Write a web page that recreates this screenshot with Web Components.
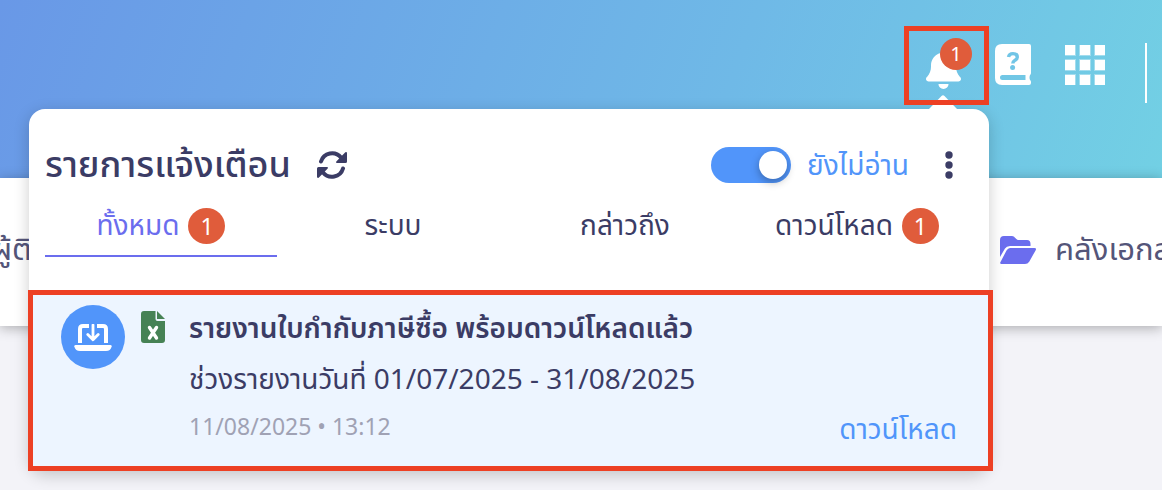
<!DOCTYPE html>
<html lang="th">
<head>
    <meta charset="UTF-8">
    <meta name="viewport" content="width=device-width, initial-scale=1.0">
    <title>รายการแจ้งเตือน</title>
    <style>
        body {
            margin: 0;
            min-height: 100vh;
            overflow: hidden;
            background: #f3f3f8;
            color: #3b3c65;
            font-family: "Noto Sans", "Noto Sans Thai", "Noto Sans Thai UI", sans-serif;
            font-size: 28px;
            --blue: #5195fa;
            --purple: #6b6dee;
            --badge: #e05c3b;
            --mark: #ed4024;
            --muted: #a0a2b4;
        }
    </style>
</head>
<body>
    <app-shell>
        <app-header slot="header"></app-header>
        <app-nav slot="nav"></app-nav>
        <notification-panel slot="panel">
            <notification-tab slot="tabs" count="1" selected>ทั้งหมด</notification-tab>
            <notification-tab slot="tabs">ระบบ</notification-tab>
            <notification-tab slot="tabs">กล่าวถึง</notification-tab>
            <notification-tab slot="tabs" count="1">ดาวน์โหลด</notification-tab>
            <notification-item>
                <span slot="title">รายงานใบกำกับภาษีซื้อ พร้อมดาวน์โหลดแล้ว</span>
                <span slot="detail">ช่วงรายงานวันที่ 01/07/2025 - 31/08/2025</span>
                <span slot="time">11/08/2025 • 13:12</span>
                <span slot="action">ดาวน์โหลด</span>
            </notification-item>
        </notification-panel>
    </app-shell>

    <script>
        const ICONS = {
            bell: ['0 0 448 512', '<path d="M224 0c-17.7 0-32 14.3-32 32v19.2C119 66 64 130.6 64 208v18.8c0 47-17.3 92.4-48.5 127.6l-7.4 8.3c-8.4 9.4-10.4 22.9-5.3 34.4S19.4 416 32 416h384c12.6 0 24-7.4 29.2-18.9s3.1-25-5.3-34.4l-7.4-8.3C401.3 319.2 384 273.9 384 226.8V208c0-77.4-55-142-128-156.8V32c0-17.7-14.3-32-32-32zm45.3 493.3c12-12 18.7-28.3 18.7-45.3H160c0 17 6.7 33.3 18.7 45.3S207 512 224 512s33.3-6.7 45.3-18.7z"/>'],
            book: ['0 0 36 41', '<path fill-rule="evenodd" d="M7 0h27q2 0 2 2v27q0 1.500-1 2-1 2.500 0 5 1 .5 1 2v1q0 2-2 2H7q-7 0-7-7V7q0-7 7-7zM7.500 31a2.500 2.500 0 0 0 0 5H30.500v-5z"/><path d="M13.500 13q.6-3.400 4.500-3.400 4.300 0 4.300 3.600c0 3.200-4.500 2.800-4.500 6.300" fill="none" stroke="#71c5e6" stroke-width="3.400"/><circle cx="17.600" cy="23.400" r="2.500" fill="#71c5e6"/>'],
            grid: ['0 0 40 40', '<path d="M0 0h10v10H0zM15 0h10v10H15zM30 0h10v10H30zM0 15h10v10H0zM15 15h10v10H15zM30 15h10v10H30zM0 30h10v10H0zM15 30h10v10H15zM30 30h10v10H30z"/><path opacity=".35" d="M0 0h11v11H0zM14 0h12v11H14zM29 0h11v11H29zM0 14h11v12H0zM14 14h12v12H14zM29 14h11v12H29zM0 29h11v11H0zM14 29h12v11H14zM29 29h11v11H29z"/>'],
            refresh: ['0 0 30 28', '<g fill="none" stroke="currentColor" stroke-width="4" stroke-linecap="round"><path d="M4 10.500A11.500 11.500 0 0 1 24 6.500"/><path d="M26 17.500A11.500 11.500 0 0 1 6 21.500"/></g><path d="M28.300 1.200q1.700-.6 1.700 1V10.500q0 1.500-1.500 1.500h-8.500q-1.800-.3-.7-1.600zM1.700 26.800Q0 27.400 0 25.800V17.500Q0 16 1.500 16h8.500q1.800.3.700 1.600z"/>'],
            dots: ['0 0 8 28', '<circle cx="4" cy="4" r="3.700"/><circle cx="4" cy="14" r="3.700"/><circle cx="4" cy="24" r="3.700"/>'],
            folder: ['0 0 36 28', '<path d="M4 0h8c3 0 3.500 4 7 4h8q3.500 0 3.500 4v2H10Q6.500 10 5 12.500L0 21V4Q0 0 4 0z"/><path d="M10 12h24.500q2.500 0 1.200 2.200l-6.500 11.500Q27.800 28 25 28H1.500Q-.5 28 .5 26l6-11.500Q8 12 10 12z"/>'],
            laptop: ['0 0 38 27', '<path d="M6 19V5q0-3 3-3h6M23 2h6q3 0 3 3v14" fill="none" stroke="currentColor" stroke-width="4"/><path d="M19 1v14.500M13.800 10.500l5.200 5.300 5.200-5.300" fill="none" stroke="currentColor" stroke-width="2.800" stroke-linecap="round" stroke-linejoin="round"/><path d="M1.500 21h35q1.500 0 1.200 1.500Q36.500 27 32 27H6Q1.500 27 .3 22.500 0 21 1.500 21z"/>'],
            excel: ['0 0 24 32', '<path d="M3 0h11.500v8q0 2 2 2H24v19q0 3-3 3H3q-3 0-3-3V3Q0 0 3 0z"/><path d="M16 0l8 8h-8z"/><path d="M8.500 16.500l7 10.500M15.500 16.500l-7 10.500" fill="none" stroke="#fff" stroke-width="3.400" stroke-linecap="round"/>']
        };

        class AppIcon extends HTMLElement {
            connectedCallback() {
                const [box, shape] = ICONS[this.getAttribute('name')];
                const shadow = this.attachShadow({ mode: 'open' });
                shadow.innerHTML = `
                    <style>
                        :host { display: block; flex: none; }
                        svg { display: block; width: 100%; height: 100%; fill: currentColor; }
                    </style>
                    <svg viewBox="${box}" aria-hidden="true">${shape}</svg>
                `;
            }
        }

        class CountBadge extends HTMLElement {
            connectedCallback() {
                this.attachShadow({ mode: 'open' }).innerHTML = `
                    <style>
                        :host {
                            display: flex;
                            align-items: center;
                            justify-content: center;
                            flex: none;
                            width: 37px;
                            height: 36px;
                            border-radius: 50%;
                            background: var(--badge);
                            color: #fff;
                            font-size: 23px;
                            line-height: 1;
                        }
                        :host([small]) { width: 32px; height: 32px; font-size: 20px; }
                    </style>
                    <slot></slot>
                `;
            }
        }

        // Page frame: stacked header and nav, with the panel floating over both
        class AppShell extends HTMLElement {
            connectedCallback() {
                this.attachShadow({ mode: 'open' }).innerHTML = `
                    <style>
                        :host { display: block; position: relative; }
                        ::slotted(notification-panel) {
                            position: absolute;
                            top: 109px;
                            left: 29px;
                            right: 173px;
                            z-index: 1;
                        }
                    </style>
                    <slot name="header"></slot>
                    <slot name="nav"></slot>
                    <slot name="panel"></slot>
                `;
            }
        }

        class AppHeader extends HTMLElement {
            connectedCallback() {
                this.attachShadow({ mode: 'open' }).innerHTML = `
                    <style>
                        :host {
                            display: flex;
                            justify-content: flex-end;
                            align-items: flex-start;
                            box-sizing: border-box;
                            height: 178px;
                            padding: 26px 15px 0;
                            background: linear-gradient(110deg, #6998e7, #6fb9e7 62%, #72d0e4);
                            color: #fff;
                        }
                        button {
                            margin: 18px 0 0;
                            padding: 0;
                            border: 0;
                            background: none;
                            color: inherit;
                            font: inherit;
                        }
                        .bell {
                            position: relative;
                            z-index: 2;
                            box-sizing: border-box;
                            width: 85px;
                            height: 79px;
                            margin: 0 6px 0 0;
                            padding: 18px 17px;
                            border: 5px solid var(--mark);
                        }
                        .bell app-icon { width: 35px; height: 40px; }
                        count-badge { position: absolute; top: 7px; right: 12px; }
                        .book app-icon { width: 36px; height: 41px; }
                        .apps { margin: 19px 0 0 34px; }
                        .apps app-icon { width: 40px; height: 40px; }
                        .divider { width: 2px; height: 60px; margin: 17px 0 0 40px; background: #fff; }
                    </style>
                    <button class="bell" aria-label="การแจ้งเตือน">
                        <app-icon name="bell"></app-icon>
                        <count-badge small>1</count-badge>
                    </button>
                    <button class="book" aria-label="คู่มือ"><app-icon name="book"></app-icon></button>
                    <button class="apps" aria-label="แอป"><app-icon name="grid"></app-icon></button>
                    <div class="divider"></div>
                `;
            }
        }

        class AppNav extends HTMLElement {
            connectedCallback() {
                this.attachShadow({ mode: 'open' }).innerHTML = `
                    <style>
                        :host {
                            display: flex;
                            justify-content: space-between;
                            align-items: center;
                            box-sizing: border-box;
                            height: 148px;
                            padding-bottom: 4px;
                            background: #fff;
                            box-shadow: 0 2px 12px rgba(0, 0, 0, 0.3);
                            white-space: nowrap;
                        }
                        a {
                            display: flex;
                            align-items: center;
                            gap: 19px;
                            color: #545579;
                            font-size: 31px;
                            text-decoration: none;
                        }
                        .contacts { margin-left: -8px; }
                        .files { width: 162px; }
                        app-icon { width: 36px; height: 28px; color: var(--purple); }
                    </style>
                    <a class="contacts" href="#contacts">ผู้ติดต่อ</a>
                    <a class="files" href="#files"><app-icon name="folder"></app-icon>คลังเอกสาร</a>
                `;
            }
        }

        class NotificationPanel extends HTMLElement {
            connectedCallback() {
                this.attachShadow({ mode: 'open' }).innerHTML = `
                    <style>
                        :host {
                            display: block;
                            padding-top: 32px;
                            border-radius: 16px;
                            background: #fff;
                            box-shadow: 0 4px 16px rgba(0, 0, 0, 0.2);
                        }
                        .pointer {
                            position: absolute;
                            top: -14px;
                            right: 32px;
                            width: 28px;
                            height: 14px;
                            fill: #fff;
                        }
                        header {
                            display: flex;
                            align-items: center;
                            height: 48px;
                            padding: 0 36px 0 16px;
                        }
                        h1 { margin: 0; font-size: 36px; font-weight: 500; line-height: 46px; padding-bottom: 2px; white-space: nowrap; }
                        button { padding: 0; border: 0; background: none; color: inherit; }
                        .refresh { margin-left: 26px; }
                        .refresh app-icon { width: 30px; height: 28px; }
                        .more { margin-left: 36px; }
                        .more app-icon { width: 8px; height: 28px; }
                        label {
                            display: flex;
                            align-items: center;
                            gap: 16px;
                            margin-left: auto;
                            color: var(--blue);
                            line-height: 46px;
                            padding-bottom: 2px;
                            white-space: nowrap;
                        }
                        input {
                            appearance: none;
                            display: flex;
                            box-sizing: border-box;
                            width: 80px;
                            height: 36px;
                            margin: 2px 0 0;
                            padding: 4px;
                            border-radius: 18px;
                            background: #c8cad6;
                        }
                        input:checked { justify-content: flex-end; background: var(--blue); }
                        input::before {
                            content: "";
                            width: 28px;
                            height: 28px;
                            border-radius: 50%;
                            background: #fff;
                            box-shadow: 0 3px 8px rgba(0, 0, 0, 0.3);
                        }
                        .tabs {
                            display: grid;
                            grid-template-columns: repeat(4, 1fr);
                            margin: 0 16px 33px;
                        }
                    </style>
                    <svg class="pointer" viewBox="0 0 28 14" aria-hidden="true"><path d="M0 14L12.500 1Q14-.5 15.500 1L28 14z"/></svg>
                    <header>
                        <h1>รายการแจ้งเตือน</h1>
                        <button class="refresh" aria-label="รีเฟรช"><app-icon name="refresh"></app-icon></button>
                        <label><input type="checkbox" role="switch" checked>ยังไม่อ่าน</label>
                        <button class="more" aria-label="เพิ่มเติม"><app-icon name="dots"></app-icon></button>
                    </header>
                    <div class="tabs" role="tablist"><slot name="tabs"></slot></div>
                    <slot></slot>
                `;
            }
        }

        class NotificationTab extends HTMLElement {
            connectedCallback() {
                const count = this.getAttribute('count');
                this.attachShadow({ mode: 'open' }).innerHTML = `
                    <style>
                        :host { display: block; }
                        button {
                            display: flex;
                            align-items: center;
                            justify-content: center;
                            gap: 9px;
                            box-sizing: border-box;
                            width: 100%;
                            height: 68px;
                            padding: 8px 0 0;
                            border: 0;
                            border-bottom: 2px solid transparent;
                            background: none;
                            color: inherit;
                            font: inherit;
                            white-space: nowrap;
                        }
                        :host([selected]) button { border-color: var(--purple); color: var(--purple); }
                    </style>
                    <button role="tab" aria-selected="${this.hasAttribute('selected')}">
                        <slot></slot>
                        ${count ? `<count-badge>${count}</count-badge>` : ''}
                    </button>
                `;
            }
        }

        class NotificationItem extends HTMLElement {
            connectedCallback() {
                this.attachShadow({ mode: 'open' }).innerHTML = `
                    <style>
                        :host {
                            display: flex;
                            position: relative;
                            padding: 15px 32px 24px;
                            background: #edf5ff;
                        }
                        /* the marked frame sits slightly outside the row */
                        :host::after {
                            content: "";
                            position: absolute;
                            inset: 0 -4px 0 -1px;
                            border: 5px solid var(--mark);
                            pointer-events: none;
                        }
                        .avatar {
                            display: flex;
                            align-items: center;
                            justify-content: center;
                            flex: none;
                            width: 64px;
                            height: 64px;
                            border-radius: 50%;
                            background: var(--blue);
                            color: #fff;
                        }
                        .avatar app-icon { width: 38px; height: 27px; }
                        .file { width: 24px; height: 32px; margin: 6px 24px 0 16px; color: #468255; }
                        .body { flex: 1; min-width: 0; white-space: nowrap; }
                        h2, p { margin: 0; }
                        h2 { font-size: 28px; font-weight: 600; line-height: 44px; }
                        p { line-height: 58px; }
                        .foot { display: flex; justify-content: space-between; line-height: 38px; }
                        time { color: var(--muted); font-size: 23px; }
                        a { color: var(--blue); text-decoration: none; padding-top: 2px; }
                    </style>
                    <div class="avatar"><app-icon name="laptop"></app-icon></div>
                    <app-icon class="file" name="excel"></app-icon>
                    <div class="body">
                        <h2><slot name="title"></slot></h2>
                        <p><slot name="detail"></slot></p>
                        <div class="foot">
                            <time><slot name="time"></slot></time>
                            <a href="#download"><slot name="action"></slot></a>
                        </div>
                    </div>
                `;
            }
        }

        customElements.define('app-icon', AppIcon);
        customElements.define('count-badge', CountBadge);
        customElements.define('app-shell', AppShell);
        customElements.define('app-header', AppHeader);
        customElements.define('app-nav', AppNav);
        customElements.define('notification-panel', NotificationPanel);
        customElements.define('notification-tab', NotificationTab);
        customElements.define('notification-item', NotificationItem);
    </script>
</body>
</html>
